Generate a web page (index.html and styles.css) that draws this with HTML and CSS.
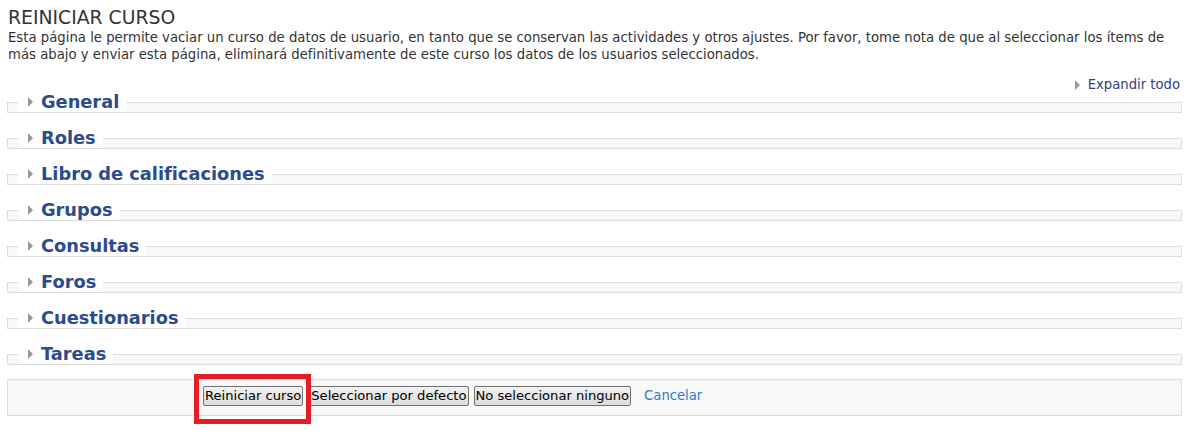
FILE: index.html
```html
<!DOCTYPE html>
<html lang="es">
<head>
<meta charset="utf-8">
<title>Reiniciar curso</title>
<link rel="stylesheet" href="styles.css">
</head>
<body>
<div class="page">
  <h2 class="title">REINICIAR CURSO</h2>
  <p class="intro">Esta página le permite vaciar un curso de datos de usuario, en tanto que se conservan las actividades y otros ajustes. Por favor, tome nota de que al seleccionar los ítems de más abajo y enviar esta página, eliminará definitivamente de este curso los datos de los usuarios seleccionados.</p>
  <div class="expand-row"><a class="expand" href="#"><svg class="tri" width="5" height="10" viewBox="0 0 5 10"><polygon points="0,0 5,5 0,10"/></svg>Expandir todo</a></div>

  <fieldset class="section"><legend><svg class="tri" width="5" height="10" viewBox="0 0 5 10"><polygon points="0,0 5,5 0,10"/></svg>General</legend></fieldset>
  <fieldset class="section"><legend><svg class="tri" width="5" height="10" viewBox="0 0 5 10"><polygon points="0,0 5,5 0,10"/></svg>Roles</legend></fieldset>
  <fieldset class="section"><legend><svg class="tri" width="5" height="10" viewBox="0 0 5 10"><polygon points="0,0 5,5 0,10"/></svg>Libro de calificaciones</legend></fieldset>
  <fieldset class="section"><legend><svg class="tri" width="5" height="10" viewBox="0 0 5 10"><polygon points="0,0 5,5 0,10"/></svg>Grupos</legend></fieldset>
  <fieldset class="section"><legend><svg class="tri" width="5" height="10" viewBox="0 0 5 10"><polygon points="0,0 5,5 0,10"/></svg>Consultas</legend></fieldset>
  <fieldset class="section"><legend><svg class="tri" width="5" height="10" viewBox="0 0 5 10"><polygon points="0,0 5,5 0,10"/></svg>Foros</legend></fieldset>
  <fieldset class="section"><legend><svg class="tri" width="5" height="10" viewBox="0 0 5 10"><polygon points="0,0 5,5 0,10"/></svg>Cuestionarios</legend></fieldset>
  <fieldset class="section"><legend><svg class="tri" width="5" height="10" viewBox="0 0 5 10"><polygon points="0,0 5,5 0,10"/></svg>Tareas</legend></fieldset>

  <div class="actions">
    <span class="primary-wrap">
      <button class="btn" type="submit">Reiniciar curso</button>
      <span class="highlight"></span>
    </span>
    <button class="btn" type="button">Seleccionar por defecto</button>
    <button class="btn" type="button">No seleccionar ninguno</button>
    <a class="cancel" href="#">Cancelar</a>
  </div>
</div>
</body>
</html>
```
FILE: styles.css
```css
html, body {
  margin: 0;
  padding: 0;
  background: #fff;
}
body {
  font-family: "DejaVu Sans", Verdana, sans-serif;
  color: #333;
}
.page {
  padding: 0 4px 20px 7px;
}
.title {
  margin: 0;
  padding: 6px 0 0 1px;
  font-size: 18.8px;
  font-weight: normal;
  line-height: 23px;
  color: #333;
}
.intro {
  margin: 0;
  padding-left: 1px;
  font-size: 13.25px;
  line-height: 17px;
  color: #333;
}
.expand-row {
  display: flex;
  justify-content: flex-end;
  margin-top: 13px;
  height: 17px;
}
.expand {
  display: flex;
  align-items: center;
  gap: 8px;
  padding-right: 2px;
  font-size: 13.2px;
  line-height: 17px;
  color: #2f3f7f;
  text-decoration: none;
}
.tri {
  display: block;
  fill: #999;
  flex: none;
}
.section {
  margin: 0;
  padding: 0;
  border: 1px solid #ddd;
  background: #f8f8f8;
  height: 10px;
  box-sizing: border-box;
}
.section + .section {
  margin-top: 15px;
}
.expand-row + .section {
  margin-top: -1px;
}
.section legend {
  display: flex;
  align-items: center;
  gap: 8px;
  margin-left: 10px;
  padding: 0 7px 0 10px;
  font-size: 17.8px;
  font-weight: bold;
  line-height: 20px;
  color: #2a4b8d;
  background: #fff;
}
.actions {
  display: flex;
  align-items: center;
  gap: 5px;
  margin-top: 14px;
  height: 37px;
  box-sizing: border-box;
  padding: 0 0 4px 195px;
  border: 1px solid #ddd;
  background: #f8f8f8;
}
.primary-wrap {
  position: relative;
  display: inline-flex;
  margin-right: 1px;
}
.highlight {
  position: absolute;
  left: -9px;
  top: -12px;
  right: -8px;
  bottom: -18px;
  border: 5px solid #e81c24;
  pointer-events: none;
}
.btn {
  font-family: "DejaVu Sans", Verdana, sans-serif;
  font-size: 13.1px;
  color: #000;
  height: 20px;
  padding: 0 1px;
  border: 1px solid #707070;
  border-radius: 2px;
  background: linear-gradient(#f2f2f2, #e6e6e6 50%, #dcdcdc);
}
.cancel {
  margin-left: 8px;
  font-size: 13.2px;
  color: #1f7fcc;
  text-decoration: none;
}
```
